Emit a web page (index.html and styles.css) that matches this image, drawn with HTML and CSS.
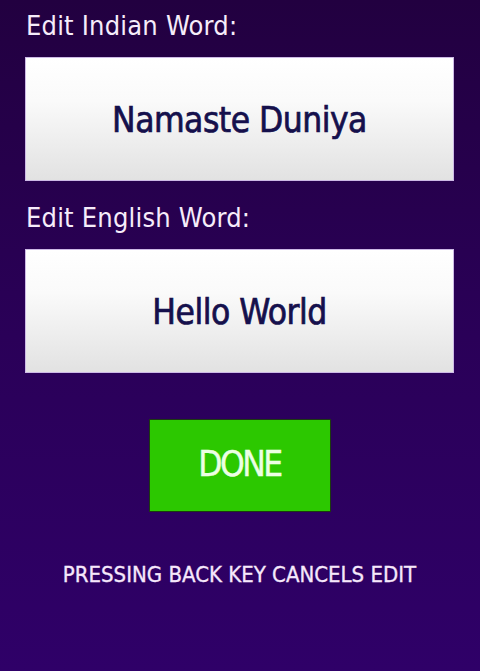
FILE: index.html
```html
<!DOCTYPE html>
<html>
<head>
<meta charset="utf-8">
<link rel="stylesheet" href="styles.css">
</head>
<body>
<div class="screen">
  <div class="label label-first">Edit Indian Word:</div>
  <div class="field"><span class="field-text">Namaste Duniya</span></div>
  <div class="label label-second">Edit English Word:</div>
  <div class="field"><span class="field-text">Hello World</span></div>
  <div class="done-row"><div class="done">DONE</div></div>
  <div class="hint">PRESSING BACK KEY CANCELS EDIT</div>
</div>
</body>
</html>
```
FILE: styles.css
```css
html, body {
  margin: 0;
  padding: 0;
}
.screen {
  width: 480px;
  height: 671px;
  box-sizing: border-box;
  padding: 0 26px 0 25px;
  background: linear-gradient(to bottom, #220040 0%, #2a0058 50%, #2f0068 100%);
  font-family: "DejaVu Sans Condensed", "DejaVu Sans", sans-serif;
  display: flex;
  flex-direction: column;
  overflow: hidden;
}
.label {
  color: #f6ecfa;
  font-size: 27px;
  line-height: 30px;
  padding-left: 1px;
  letter-spacing: 0.2px;
}
.label-first {
  margin-top: 11px;
}
.label-second {
  margin-top: 22px;
}
.field {
  margin-top: 16px;
  height: 124px;
  box-sizing: border-box;
  border: 1px solid #cdb9e6;
  background: linear-gradient(to bottom, #ffffff 0%, #fafafa 35%, #e2e2e2 100%);
  display: flex;
  align-items: center;
  justify-content: center;
}
.field-text {
  color: #15104c;
  font-size: 35px;
  line-height: 40px;
  letter-spacing: -0.5px;
  -webkit-text-stroke: 0.7px #15104c;
  margin-top: 2px;
}
.done-row {
  margin-top: 46px;
  display: flex;
  justify-content: center;
}
.done {
  width: 182px;
  height: 93px;
  box-sizing: border-box;
  border: 1px solid #1d3a10;
  background: #2cc800;
  color: #ecffe4;
  font-size: 35px;
  letter-spacing: -2.5px;
  -webkit-text-stroke: 0.4px #ecffe4;
  display: flex;
  align-items: center;
  justify-content: center;
  padding-bottom: 3px;
}
.hint {
  margin-top: 50px;
  text-align: center;
  color: #f6e8fb;
  font-size: 22px;
  line-height: 26px;
  -webkit-text-stroke: 0.3px #f6e8fb;
}
```
